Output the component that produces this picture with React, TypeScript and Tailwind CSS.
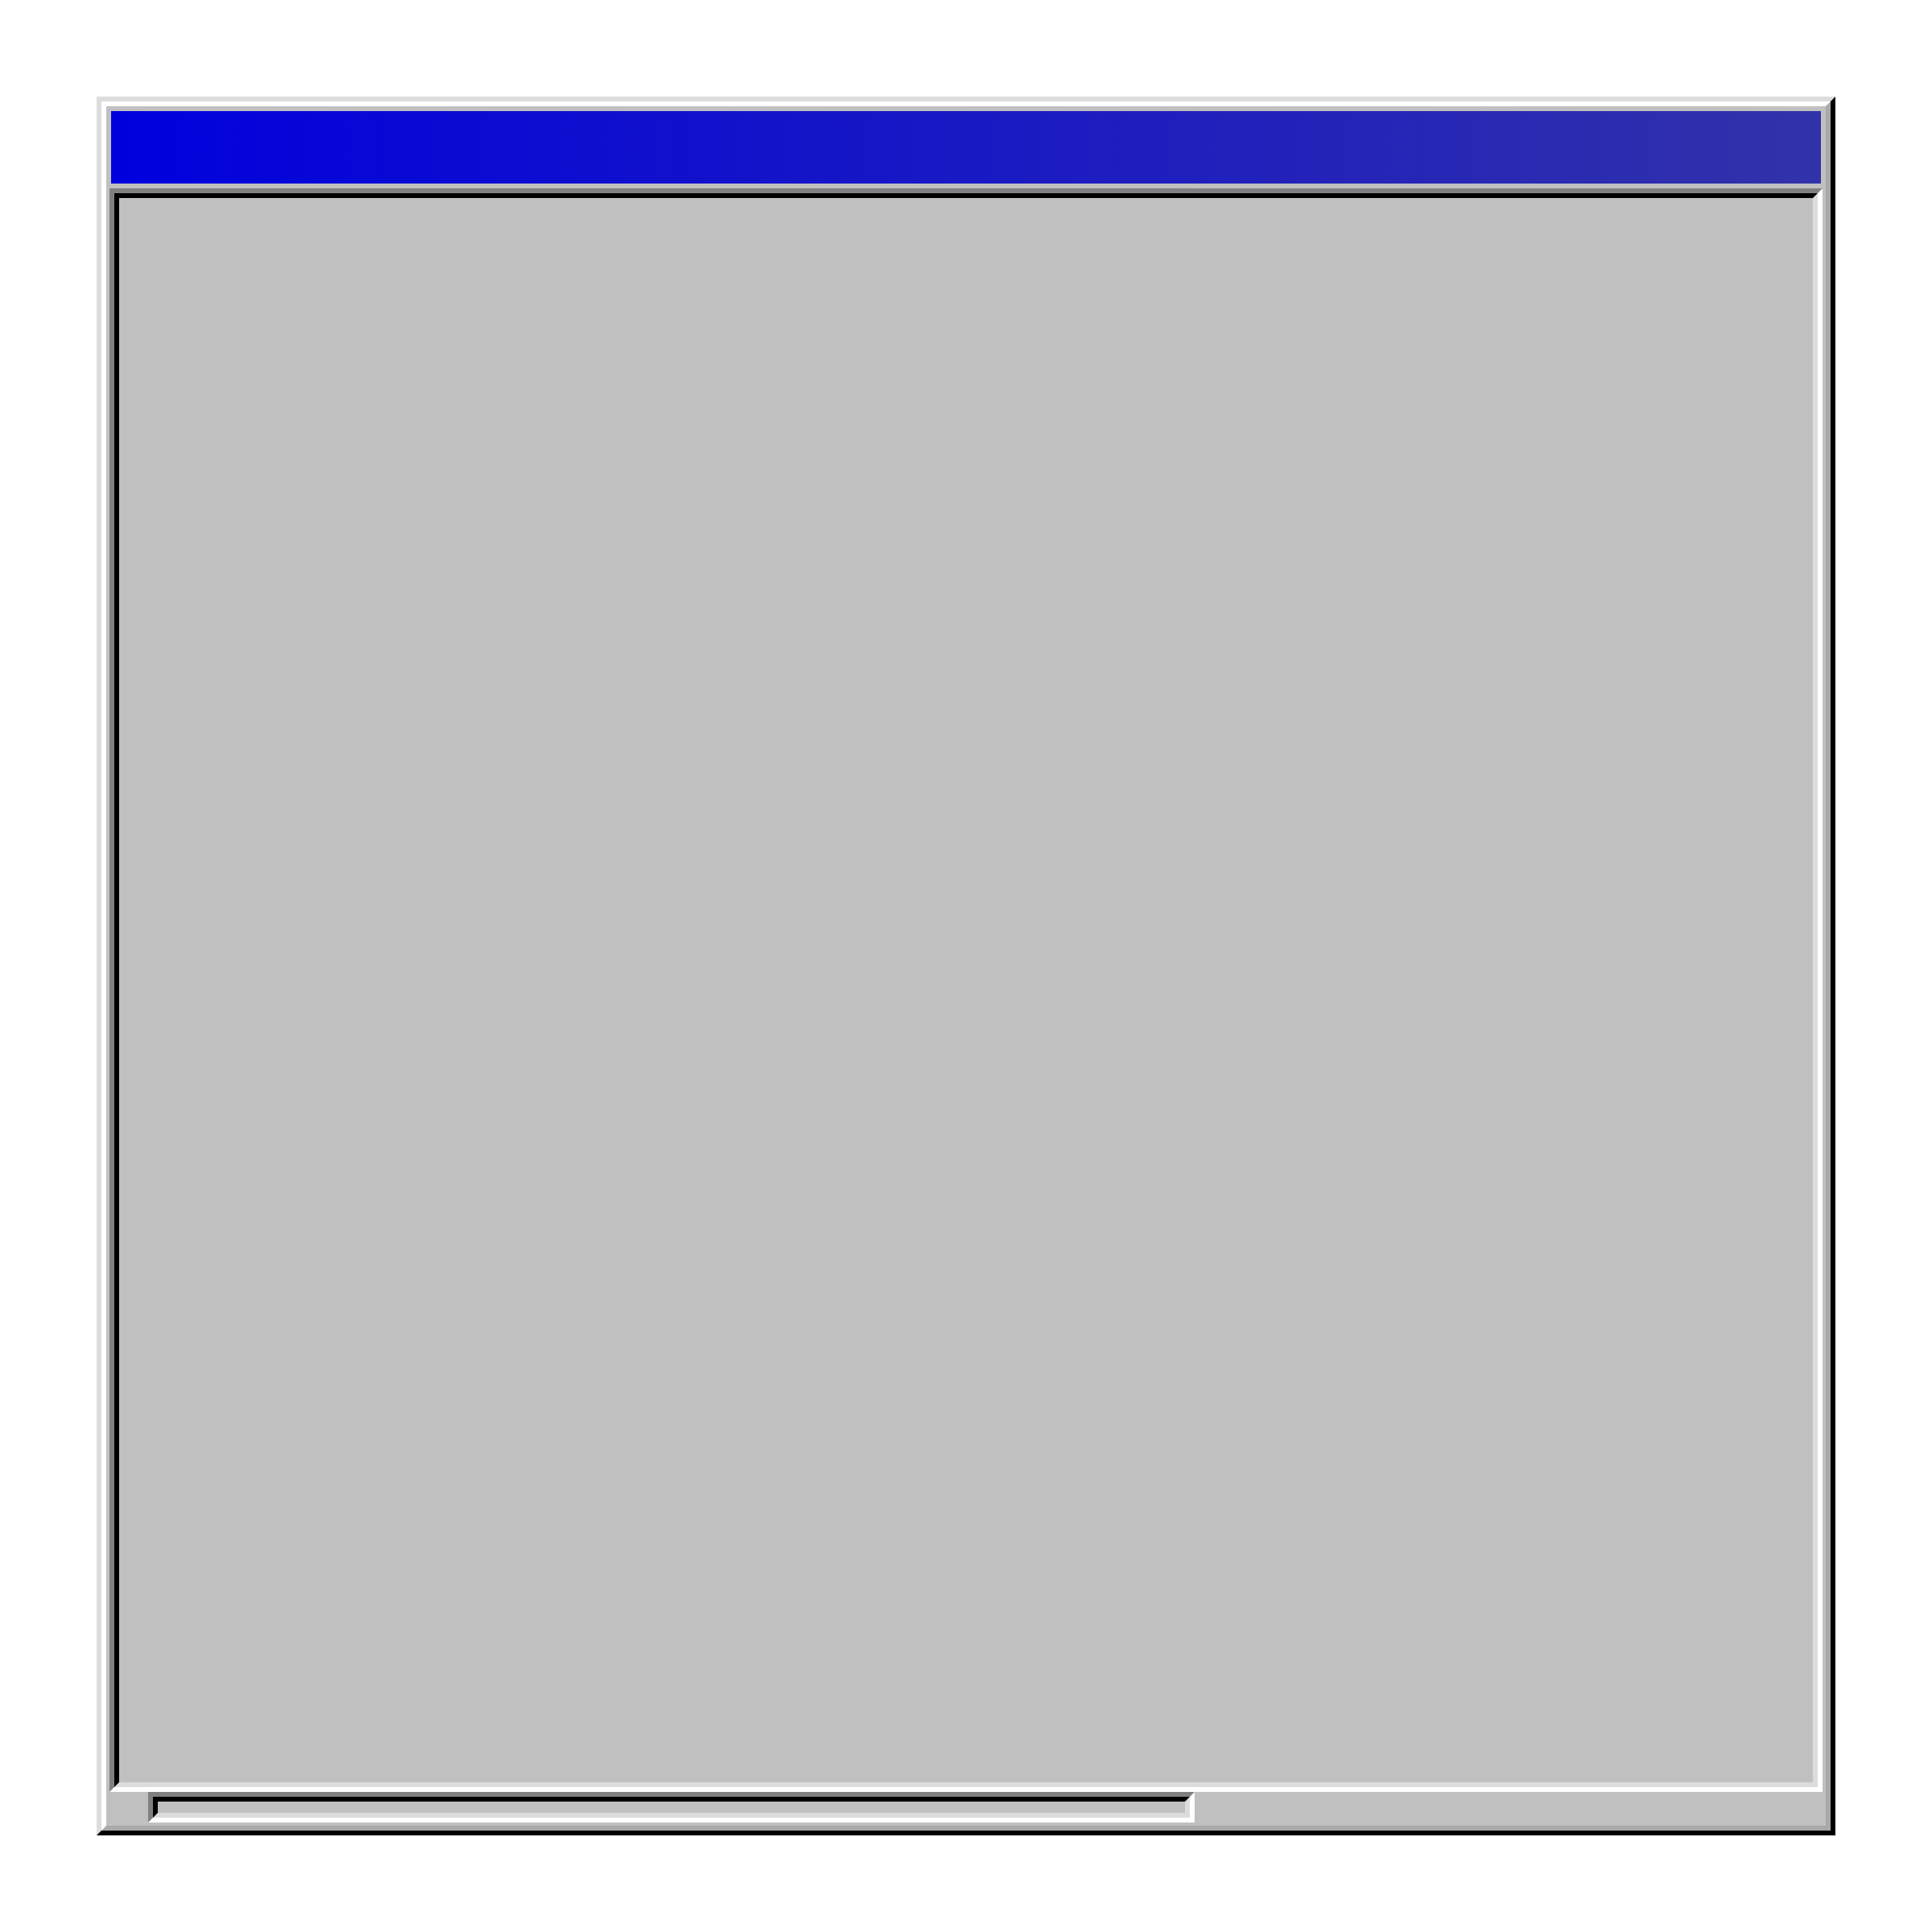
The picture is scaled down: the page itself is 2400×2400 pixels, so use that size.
import * as React from "react";

export default function App() {
  return (
    <div className="w-[2400px] h-[2400px] bg-white pt-[120px] pl-[120px]">
      {/* window frame: outer bevel */}
      <div className="w-[2160px] h-[2160px] border-[6px] border-t-[#dcdcdc] border-l-[#dcdcdc] border-r-black border-b-black">
        <div className="h-full flex flex-col bg-[#c0c0c0] border-[6px] border-t-white border-l-white border-r-[#a9a9a9] border-b-[#a9a9a9] px-[6px] pt-[6px] pb-[4px]">
          {/* title bar */}
          <div className="h-[90px] shrink-0 bg-[linear-gradient(to_right,#0000de,#3232aa)]" />
          {/* client area, sunken */}
          <div className="mt-[6px] mx-[-2px] flex-1 border-[6px] border-t-[#808080] border-l-[#808080] border-r-white border-b-white">
            <div className="h-full bg-[#c0c0c0] border-[6px] border-t-black border-l-black border-r-[#dcdcdc] border-b-[#dcdcdc]" />
          </div>
          {/* status bar */}
          <div className="h-[38px] shrink-0 flex">
            <div className="ml-[46px] w-[1300px] h-full border-[6px] border-t-[#808080] border-l-[#808080] border-r-white border-b-white">
              <div className="h-full bg-[#c0c0c0] border-[6px] border-t-black border-l-black border-r-[#dcdcdc] border-b-[#dcdcdc]" />
            </div>
          </div>
        </div>
      </div>
    </div>
  );
}
